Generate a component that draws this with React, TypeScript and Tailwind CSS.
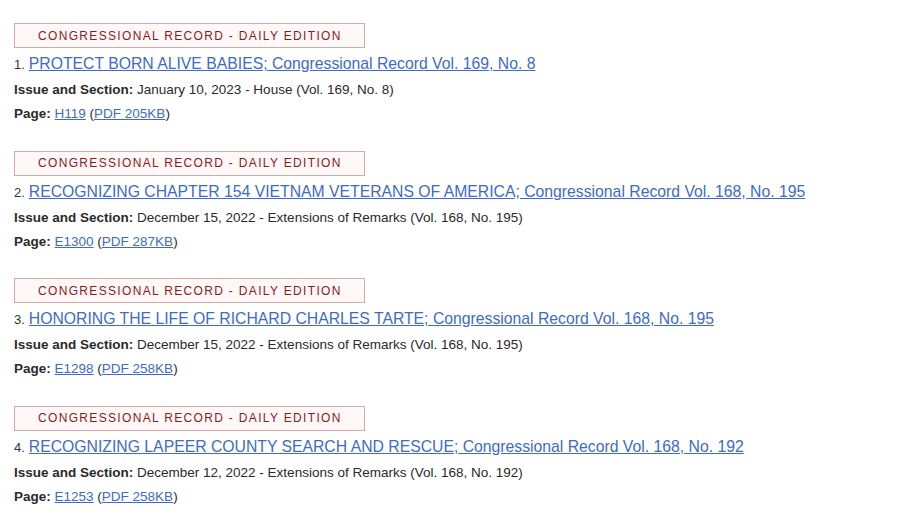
import React from "react";

const items = [
  {
    n: 1,
    title: "PROTECT BORN ALIVE BABIES; Congressional Record Vol. 169, No. 8",
    issue: "January 10, 2023 - House (Vol. 169, No. 8)",
    page: "H119",
    pdf: "PDF 205KB",
  },
  {
    n: 2,
    title: "RECOGNIZING CHAPTER 154 VIETNAM VETERANS OF AMERICA; Congressional Record Vol. 168, No. 195",
    issue: "December 15, 2022 - Extensions of Remarks (Vol. 168, No. 195)",
    page: "E1300",
    pdf: "PDF 287KB",
  },
  {
    n: 3,
    title: "HONORING THE LIFE OF RICHARD CHARLES TARTE; Congressional Record Vol. 168, No. 195",
    issue: "December 15, 2022 - Extensions of Remarks (Vol. 168, No. 195)",
    page: "E1298",
    pdf: "PDF 258KB",
  },
  {
    n: 4,
    title: "RECOGNIZING LAPEER COUNTY SEARCH AND RESCUE; Congressional Record Vol. 168, No. 192",
    issue: "December 12, 2022 - Extensions of Remarks (Vol. 168, No. 192)",
    page: "E1253",
    pdf: "PDF 258KB",
  },
];

export default function App() {
  return (
    <div
      className="w-[919px] h-[523px] bg-white px-[14px] pt-[23px] text-[#222]"
      style={{ fontFamily: '"Liberation Sans", Arial, sans-serif' }}
    >
      {items.map((it) => (
        <div key={it.n} className="mb-[24.67px]">
          <div className="w-[351px] h-[25px] border border-[#d6a8a8] bg-[#fef8f8] flex items-center pl-[23px] text-[12px] tracking-[1.33px] text-[#8b1a1a]">
            CONGRESSIONAL RECORD - DAILY EDITION
          </div>
          <div className="mt-[6px] h-[20px] leading-[20px] flex items-baseline">
            <span className="text-[13px] text-[#333] mr-[4px]">{it.n}.</span>
            <a href="#" className="text-[15.75px] text-[#3d6bc7] underline">
              {it.title}
            </a>
          </div>
          <div className="mt-[4px] h-[24px] leading-[24px] text-[13.5px] text-[#2a2a2a]">
            <b>Issue and Section:</b> {it.issue}
          </div>
          <div className="h-[24px] leading-[24px] text-[13.5px] text-[#2a2a2a]">
            <b>Page:</b>{" "}
            <a href="#" className="text-[#3d6bc7] underline">
              {it.page}
            </a>{" "}
            (
            <a href="#" className="text-[#3d6bc7] underline">
              {it.pdf}
            </a>
            )
          </div>
        </div>
      ))}
    </div>
  );
}
